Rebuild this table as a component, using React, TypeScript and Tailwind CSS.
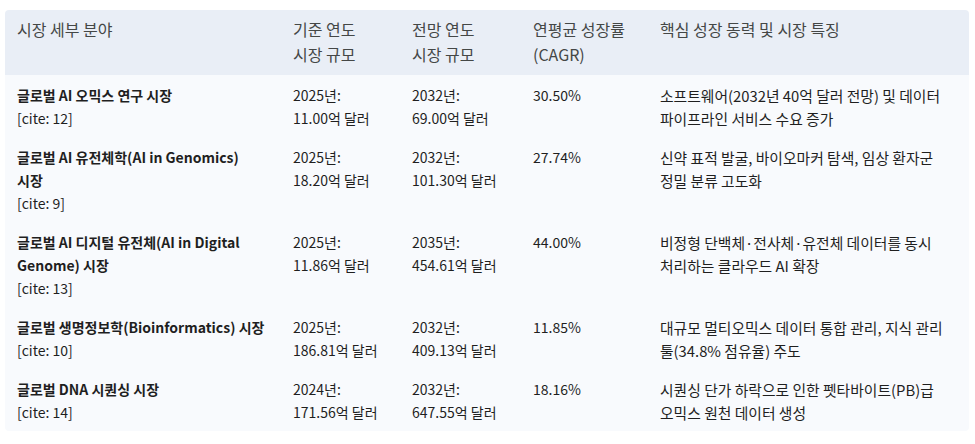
const rows = [
  {
    name: ["글로벌 AI 오믹스 연구 시장"],
    cite: "[cite: 12]",
    base: ["2025년:", "11.00억 달러"],
    forecast: ["2032년:", "69.00억 달러"],
    cagr: "30.50%",
    driver: ["소프트웨어(2032년 40억 달러 전망) 및 데이터", "파이프라인 서비스 수요 증가"],
  },
  {
    name: ["글로벌 AI 유전체학(AI in Genomics)", "시장"],
    cite: "[cite: 9]",
    base: ["2025년:", "18.20억 달러"],
    forecast: ["2032년:", "101.30억 달러"],
    cagr: "27.74%",
    driver: ["신약 표적 발굴, 바이오마커 탐색, 임상 환자군", "정밀 분류 고도화"],
  },
  {
    name: ["글로벌 AI 디지털 유전체(AI in Digital", "Genome) 시장"],
    cite: "[cite: 13]",
    base: ["2025년:", "11.86억 달러"],
    forecast: ["2035년:", "454.61억 달러"],
    cagr: "44.00%",
    driver: ["비정형 단백체·전사체·유전체 데이터를 동시", "처리하는 클라우드 AI 확장"],
  },
  {
    name: ["글로벌 생명정보학(Bioinformatics) 시장"],
    cite: "[cite: 10]",
    base: ["2025년:", "186.81억 달러"],
    forecast: ["2032년:", "409.13억 달러"],
    cagr: "11.85%",
    driver: ["대규모 멀티오믹스 데이터 통합 관리, 지식 관리", "툴(34.8% 점유율) 주도"],
  },
  {
    name: ["글로벌 DNA 시퀀싱 시장"],
    cite: "[cite: 14]",
    base: ["2024년:", "171.56억 달러"],
    forecast: ["2032년:", "647.55억 달러"],
    cagr: "18.16%",
    driver: ["시퀀싱 단가 하락으로 인한 펫타바이트(PB)급", "오믹스 원천 데이터 생성"],
  },
];

const font = { fontFamily: '"Noto Sans CJK KR", Roboto, sans-serif' };

function Lines({ items }: { items: string[] }) {
  return (
    <>
      {items.map((t) => (
        <div key={t} className="whitespace-nowrap">
          {t}
        </div>
      ))}
    </>
  );
}

export default function App() {
  return (
    <div className="bg-white w-[975px] h-[444px] pt-[10px] pl-[5px]" style={font}>
      <table className="w-[964px] table-fixed border-collapse rounded-[4px] overflow-hidden text-[14px]">
        <colgroup>
          <col className="w-[276px]" />
          <col className="w-[119px]" />
          <col className="w-[121px]" />
          <col className="w-[127px]" />
          <col className="w-[321px]" />
        </colgroup>
        <thead className="bg-[#e9eef6] text-[#444746] text-[16px]">
          <tr className="align-top text-left leading-[25px]">
            <th className="font-normal pl-3 pr-2 pt-[7px] pb-[8px]">시장 세부 분야</th>
            <th className="font-normal pl-3 pr-2 pt-[7px] pb-[8px]">
              <Lines items={["기준 연도", "시장 규모"]} />
            </th>
            <th className="font-normal pl-3 pr-2 pt-[7px] pb-[8px]">
              <Lines items={["전망 연도", "시장 규모"]} />
            </th>
            <th className="font-normal pl-3 pr-2 pt-[7px] pb-[8px]">
              <Lines items={["연평균 성장률", "(CAGR)"]} />
            </th>
            <th className="font-normal pl-3 pr-2 pt-[7px] pb-[8px]">핵심 성장 동력 및 시장 특징</th>
          </tr>
        </thead>
        <tbody className="bg-[#f8fafd] text-[#1f1f1f] leading-[23px]">
          {rows.map((r) => (
            <tr key={r.cite} className="align-top">
              <td className="pl-3 pr-3 pt-[9px] pb-[7px]">
                <div className="font-bold">
                  <Lines items={r.name} />
                </div>
                <div>{r.cite}</div>
              </td>
              <td className="pl-3 pr-2 pt-[9px] pb-[7px]">
                <Lines items={r.base} />
              </td>
              <td className="pl-3 pr-2 pt-[9px] pb-[7px]">
                <Lines items={r.forecast} />
              </td>
              <td className="pl-3 pr-2 pt-[9px] pb-[7px]">{r.cagr}</td>
              <td className="pl-3 pr-3 pt-[9px] pb-[7px] text-[14.8px]">
                <Lines items={r.driver} />
              </td>
            </tr>
          ))}
        </tbody>
      </table>
    </div>
  );
}
